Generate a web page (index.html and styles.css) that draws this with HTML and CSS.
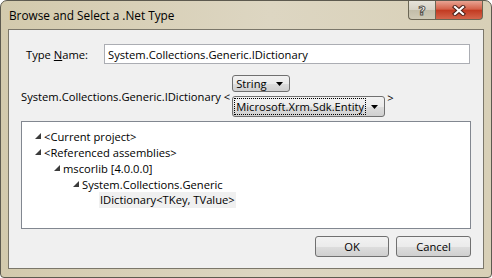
FILE: index.html
```html
<!DOCTYPE html>
<html lang="en">
<head>
    <meta charset="UTF-8">
    <title>Browse and Select a .Net Type</title>
    <link rel="stylesheet" href="styles.css">
</head>
<body>

    <div class="window">

        <!-- Title Bar -->
        <div class="titlebar">
            <span class="title">Browse and Select a .Net Type</span>
            <div class="caption-buttons">
                <button class="cap-btn cap-help">?</button>
                <button class="cap-btn cap-close">
                    <svg width="14" height="11" viewBox="0 0 14 11">
                        <path d="M3 2 L11 9 M11 2 L3 9" stroke="#4a2018" stroke-width="4.2" stroke-linecap="square"/>
                        <path d="M3 2 L11 9 M11 2 L3 9" stroke="#ffffff" stroke-width="2.2" stroke-linecap="square"/>
                    </svg>
                </button>
            </div>
        </div>

        <!-- Dialog Body -->
        <div class="client">

            <div class="name-row">
                <label for="typeName">Type <u>N</u>ame:</label>
                <input type="text" id="typeName" value="System.Collections.Generic.IDictionary">
            </div>

            <div class="generic-row">
                <span>System.Collections.Generic.IDictionary &lt;</span>
                <div class="combo-stack">
                    <div class="combo combo-small">
                        <span>String</span>
                        <svg class="arrow" width="7" height="4" viewBox="0 0 7 4"><polygon points="0,0 7,0 3.5,4" fill="#000"/></svg>
                    </div>
                    <div class="combo combo-wide">
                        <span class="focus-text">Microsoft.Xrm.Sdk.Entity</span>
                        <svg class="arrow" width="7" height="4" viewBox="0 0 7 4"><polygon points="0,0 7,0 3.5,4" fill="#000"/></svg>
                    </div>
                </div>
                <span class="close-angle">&gt;</span>
            </div>

            <!-- Type Tree -->
            <div class="tree">
                <div class="node level-0">
                    <svg class="expander" width="6" height="6" viewBox="0 0 6 6"><polygon points="6,0 6,6 0,6" fill="#3c3c3c"/></svg>
                    <span>&lt;Current project&gt;</span>
                </div>
                <div class="node level-0">
                    <svg class="expander" width="6" height="6" viewBox="0 0 6 6"><polygon points="6,0 6,6 0,6" fill="#3c3c3c"/></svg>
                    <span>&lt;Referenced assemblies&gt;</span>
                </div>
                <div class="node level-1">
                    <svg class="expander" width="6" height="6" viewBox="0 0 6 6"><polygon points="6,0 6,6 0,6" fill="#3c3c3c"/></svg>
                    <span>mscorlib [4.0.0.0]</span>
                </div>
                <div class="node level-2">
                    <svg class="expander" width="6" height="6" viewBox="0 0 6 6"><polygon points="6,0 6,6 0,6" fill="#3c3c3c"/></svg>
                    <span>System.Collections.Generic</span>
                </div>
                <div class="node level-3">
                    <span class="selected">IDictionary&lt;TKey, TValue&gt;</span>
                </div>
            </div>

            <div class="buttons">
                <button class="btn btn-ok">OK</button>
                <button class="btn btn-cancel">Cancel</button>
            </div>

        </div>
    </div>

</body>
</html>
```

FILE: styles.css
```css
/* General Page Styling */
body {
    margin: 0;
    padding: 0;
    font-family: "Open Sans", "Noto Sans", sans-serif;
    font-size: 11.2px;
    color: #000;
    background: #ffffff;
}

/* Window Frame */
.window {
    width: 492px;
    height: 278px;
    box-sizing: border-box;
    display: flex;
    flex-direction: column;
    padding: 0 7px 8px 7px;
    border: 1px solid #5d5a4f;
    border-radius: 7px 7px 4px 4px;
    background: linear-gradient(to right, #d3caad 0%, #ddd6c2 55%, #d8d0b7 100%);
}

.titlebar {
    height: 28px;
    display: flex;
    justify-content: space-between;
    align-items: flex-start;
}

.title {
    margin-top: 6px;
    margin-left: 1px;
    font-size: 11.8px;
}

.caption-buttons {
    display: flex;
    margin-right: 1px;
}

.cap-btn {
    height: 19px;
    border: 1px solid #6b6654;
    border-top: none;
    padding: 0;
    display: flex;
    align-items: center;
    justify-content: center;
}

.cap-help {
    width: 27px;
    border-radius: 0 0 0 4px;
    border-right: none;
    background: linear-gradient(to bottom, #e6e3da 0%, #d6d2c6 50%, #c2bda9 51%, #cfcab6 100%);
    color: #fff;
    font-family: "DejaVu Sans", sans-serif;
    font-weight: bold;
    font-size: 13px;
    -webkit-text-stroke: 1px #55524a;
}

.cap-close {
    width: 48px;
    border-radius: 0 0 4px 0;
    background: linear-gradient(to bottom, #e8a493 0%, #d4624a 45%, #c23b22 52%, #d4654b 100%);
}

/* Dialog Body */
.client {
    flex: 1;
    display: flex;
    flex-direction: column;
    padding: 14px 12px 11px 12px;
    background: #f0f0f0;
    border: 1px solid #7b776a;
}

.name-row {
    display: flex;
    align-items: center;
    height: 20px;
}

.name-row label {
    width: 78px;
    margin-left: 5px;
}

.name-row input {
    flex: 1;
    height: 20px;
    box-sizing: border-box;
    margin: 0 1px 0 0;
    padding: 0 3px;
    border: 1px solid #abadb3;
    font-family: inherit;
    font-size: 11.2px;
    background: #fff;
}

.generic-row {
    display: flex;
    align-items: center;
    height: 42px;
    margin-top: 11px;
}

.combo-stack {
    display: flex;
    flex-direction: column;
    align-items: flex-start;
    gap: 4px;
    margin-left: 2px;
}

.combo {
    box-sizing: border-box;
    display: flex;
    align-items: center;
    justify-content: space-between;
    border: 1px solid #707070;
    border-radius: 3px;
    padding: 0 6px 0 3px;
    background: linear-gradient(to bottom, #f2f2f2 0%, #ebebeb 50%, #dddddd 51%, #cfcfcf 100%);
}

.combo-small {
    width: 58px;
    height: 17px;
}

.combo-wide {
    width: 153px;
    height: 21px;
    padding-left: 1px;
}

.focus-text {
    padding: 0 1px;
    border: 1px dotted #000;
    line-height: 15px;
}

.close-angle {
    margin-left: 2px;
    align-self: flex-start;
    margin-top: 15px;
}

/* Type Tree */
.tree {
    height: 108px;
    box-sizing: border-box;
    margin-top: 4px;
    padding-top: 6px;
    border: 1px solid #828790;
    background: #fff;
}

.node {
    height: 16px;
    display: flex;
    align-items: center;
}

.expander {
    margin-right: 3px;
}

.level-0 { padding-left: 13px; }
.level-1 { padding-left: 32px; }
.level-2 { padding-left: 51px; }
.level-3 { padding-left: 77px; }

.selected {
    background: #f0f0f0;
    padding: 0 1px;
    line-height: 16px;
}

/* Buttons */
.buttons {
    display: flex;
    justify-content: flex-end;
    gap: 7px;
    margin-top: 7px;
}

.btn {
    height: 21px;
    border: 1px solid #707070;
    border-radius: 3px;
    font-family: inherit;
    font-size: 11.2px;
    background: linear-gradient(to bottom, #f2f2f2 0%, #ebebeb 50%, #dddddd 51%, #cfcfcf 100%);
}

.btn-ok {
    width: 74px;
}

.btn-cancel {
    width: 75px;
}
```
